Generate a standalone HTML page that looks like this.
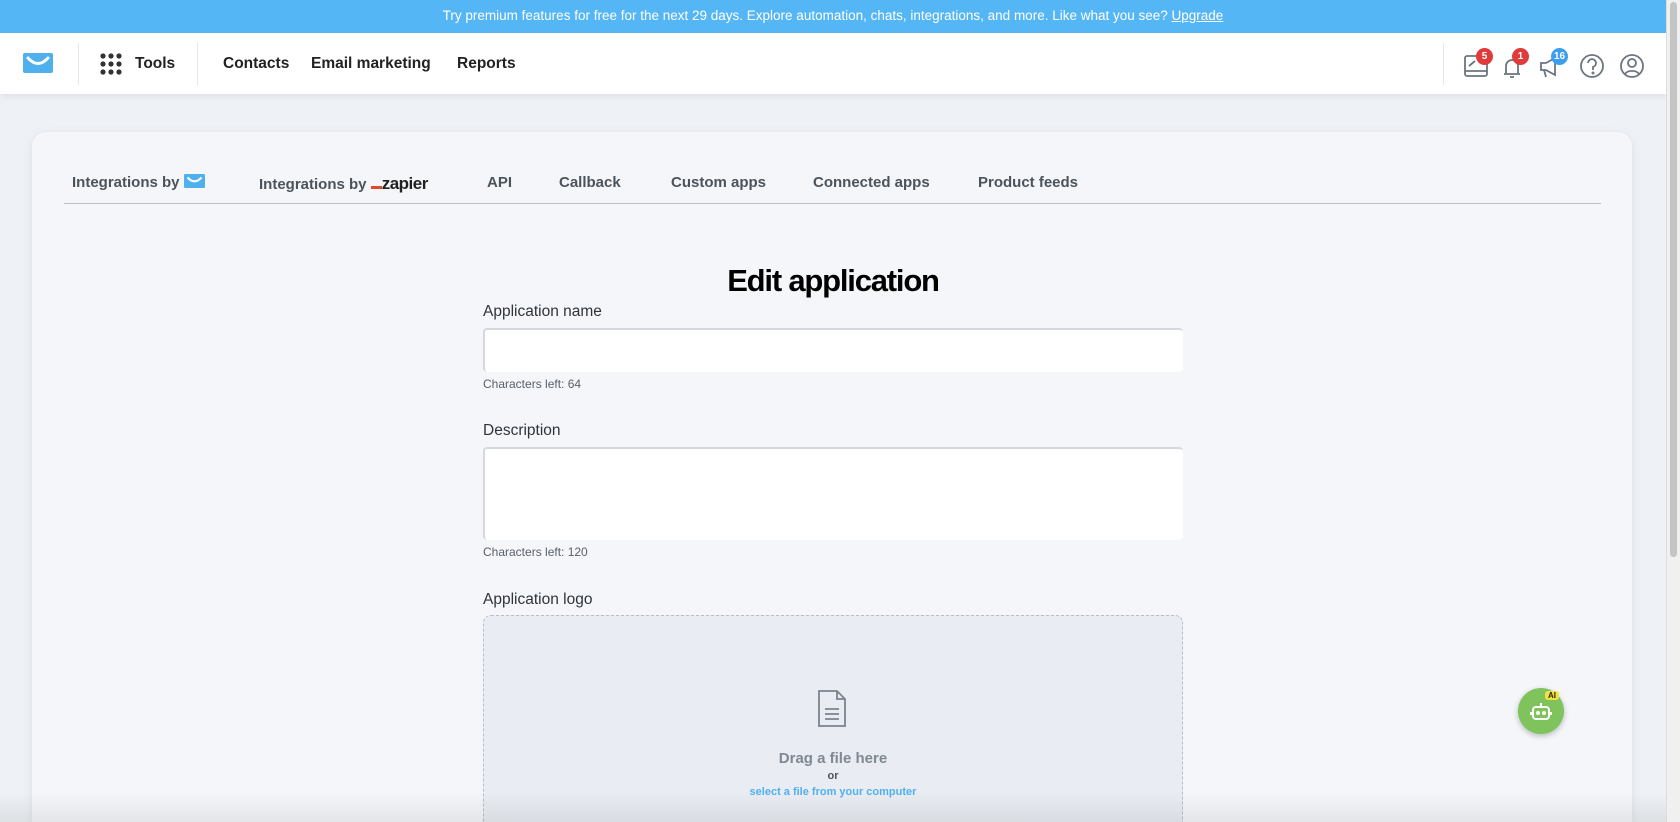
<!DOCTYPE html>
<html style="overflow:hidden;height:822px"><head><meta charset="utf-8"><style>
*{box-sizing:border-box;margin:0;padding:0}
html,body{overflow:hidden}
body{width:1680px;height:822px;background:#eef1f5;font-family:"Liberation Sans",sans-serif;position:relative;color:#2a2f36}
.banner{position:absolute;left:0;top:0;width:1666px;height:33px;background:#55b6f6;color:#fff;font-size:13.5px;text-align:center;line-height:32px}
.banner u{color:#fff}
.hdr{position:absolute;left:0;top:33px;width:1666px;height:61px;background:#fff;box-shadow:0 2px 6px rgba(0,0,0,.08)}
.hdr .t{position:absolute;top:22px;font-weight:bold;font-size:15.5px;color:#222}
.vd{position:absolute;top:10px;width:1px;height:42px;background:#e3e6ea}
.scroll{position:absolute;right:0;top:0;width:14px;height:822px;background:#f0f0f0;border-left:1px solid #ddd}
.scroll div{position:absolute;left:3px;top:2px;width:7px;height:555px;background:#c4c4c4;border-radius:4px}
.card{position:absolute;left:32px;top:132px;width:1600px;height:690px;background:#f4f6f9;border-radius:14px 14px 0 0;box-shadow:0 2px 10px rgba(0,0,0,.08)}
.tab{position:absolute;top:174px;font-weight:bold;font-size:15px;color:#4b535d}
.line{position:absolute;left:64px;top:203px;width:1537px;height:1px;background:#b8bec6}
h1{position:absolute;left:0;width:1666px;text-align:center;top:263px;font-size:31px;font-weight:900;color:#000;letter-spacing:-1.2px}
.lbl{position:absolute;left:483px;font-size:15.5px;color:#2f343b}
.inp{position:absolute;left:483px;width:700px;background:#fff;border-radius:4px;border-top:2px solid #d5d9df;border-left:2px solid #d5d9df}
.small{position:absolute;left:483px;font-size:12px;color:#59606a}
.drop{position:absolute;left:483px;top:615px;width:700px;height:230px;background:#e9edf3;border:1.5px dashed #b8bec6;border-radius:8px}
.badge{position:absolute;border-radius:50%;color:#fff;font-size:10px;font-weight:bold;text-align:center;line-height:17px;height:17px;min-width:17px}
.fade{position:absolute;left:0;top:792px;width:1666px;height:30px;background:linear-gradient(rgba(0,0,0,0),rgba(0,0,0,.07))}
</style></head><body>
<div class="banner">Try premium features for free for the next 29 days. Explore automation, chats, integrations, and more. Like what you see? <u>Upgrade</u></div>
<div class="hdr">
<svg style="position:absolute;left:23px;top:20px" width="30" height="20" viewBox="0 0 30 20"><rect width="30" height="20" rx="2" fill="#4fb0ee"/><path d="M5 5 Q15 16 25 5" stroke="#fff" stroke-width="3" fill="none" stroke-linecap="round"/></svg>
<div class="vd" style="left:78px"></div>
<svg style="position:absolute;left:100px;top:20px" width="22" height="22"><g fill="#333"><circle cx="3" cy="3" r="2.6"/><circle cx="11" cy="3" r="2.6"/><circle cx="19" cy="3" r="2.6"/><circle cx="3" cy="11" r="2.6"/><circle cx="11" cy="11" r="2.6"/><circle cx="19" cy="11" r="2.6"/><circle cx="3" cy="19" r="2.6"/><circle cx="11" cy="19" r="2.6"/><circle cx="19" cy="19" r="2.6"/></g></svg>
<div class="t" style="left:135px">Tools</div>
<div class="vd" style="left:197px"></div>
<div class="t" style="left:223px">Contacts</div>
<div class="t" style="left:311px">Email marketing</div>
<div class="t" style="left:457px">Reports</div>
<div class="vd" style="left:1443px"></div>
<svg style="position:absolute;left:1462px;top:18px" width="200" height="30" fill="none" stroke="#6b7480" stroke-width="1.8">
<rect x="3" y="5" width="22" height="20" rx="2"/><path d="M3 20h22M7 15l6-5"/>
<path d="M42 23h16M44 23v-8a6 6 0 0 1 12 0v8M48 26h4"/>
<path d="M79 12h5l9-5v17l-9-5h-5zM82 19l2 7"/>
<circle cx="130" cy="15" r="11"/><path d="M126 12a4 4 0 1 1 5 4v3"/><circle cx="131" cy="22" r=".6"/>
<circle cx="170" cy="15" r="11"/><circle cx="170" cy="12" r="4"/><path d="M163 23a8 6 0 0 1 14 0"/></svg>
<div class="badge" style="left:1476px;top:15px;background:#e03a3a">5</div>
<div class="badge" style="left:1512px;top:15px;background:#e03a3a">1</div>
<div class="badge" style="left:1551px;top:15px;background:#3d9ef0">16</div>
</div>
<div class="scroll"><div></div></div>
<div class="card"></div>
<div class="tab" style="left:72px">Integrations by <svg width="21" height="14" viewBox="0 0 30 20" style="vertical-align:-1px"><rect width="30" height="20" rx="2" fill="#4fb0ee"/><path d="M5 5 Q15 16 25 5" stroke="#fff" stroke-width="3" fill="none"/></svg></div>
<div class="tab" style="left:259px">Integrations by <span style="display:inline-block;width:11px;height:3px;background:#e2492b;vertical-align:0"></span><span style="color:#222;font-weight:900;font-size:17px;letter-spacing:-.5px">zapier</span></div>
<div class="tab" style="left:487px">API</div>
<div class="tab" style="left:559px">Callback</div>
<div class="tab" style="left:671px">Custom apps</div>
<div class="tab" style="left:813px">Connected apps</div>
<div class="tab" style="left:978px">Product feeds</div>
<div class="line"></div>
<h1>Edit application</h1>
<div class="lbl" style="top:303px">Application name</div>
<div class="inp" style="top:328px;height:44px"></div>
<div class="small" style="top:377px">Characters left: 64</div>
<div class="lbl" style="top:422px">Description</div>
<div class="inp" style="top:447px;height:93px"></div>
<div class="small" style="top:545px">Characters left: 120</div>
<div class="lbl" style="top:591px">Application logo</div>
<div class="drop"></div>
<svg style="position:absolute;left:816px;top:689px" width="32" height="40" fill="none" stroke="#7b838d" stroke-width="1.8"><path d="M3 2h18l8 8v27H3zM21 2v8h8M9 20h14M9 25h14M9 30h14"/></svg>
<div style="position:absolute;left:0;width:1666px;text-align:center;top:750px;font-weight:bold;font-size:15px;color:#808893">Drag a file here</div>
<div style="position:absolute;left:0;width:1666px;text-align:center;top:770px;font-weight:bold;font-size:11px;color:#4b535d">or</div>
<div style="position:absolute;left:0;width:1666px;text-align:center;top:786px;font-weight:bold;font-size:11px;color:#4fb0ee">select a file from your computer</div>
<div style="position:absolute;left:1518px;top:688px;width:46px;height:46px;border-radius:50%;background:#7ec35b;box-shadow:0 2px 6px rgba(0,0,0,.25)"></div>
<svg style="position:absolute;left:1529px;top:699px" width="24" height="24" fill="none" stroke="#fff" stroke-width="2"><rect x="4" y="8" width="16" height="12" rx="3"/><path d="M12 4v4M2 13v3M22 13v3"/><circle cx="9" cy="14" r="1" fill="#fff"/><circle cx="15" cy="14" r="1" fill="#fff"/></svg>
<div style="position:absolute;left:1545px;top:691px;background:#f5e23a;color:#222;font-size:8px;font-weight:bold;padding:0 3px;border-radius:3px">AI</div>
<div class="fade"></div>
</body></html>
